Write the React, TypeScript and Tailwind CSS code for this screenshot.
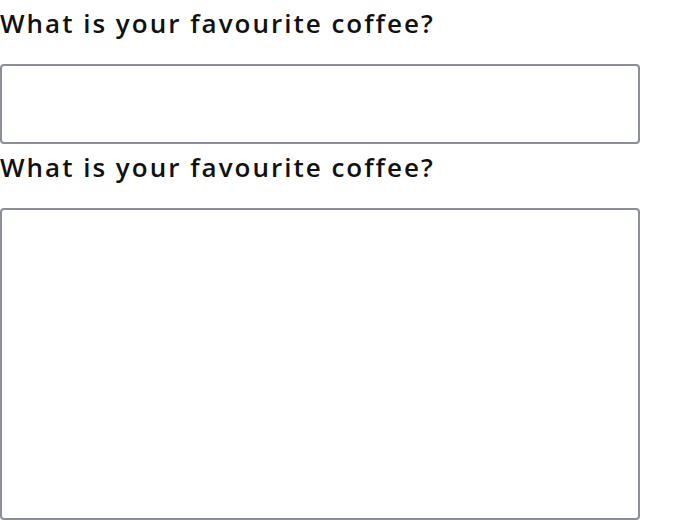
import React from "react";

const Label = ({ htmlFor }: { htmlFor: string }) => (
  <label
    htmlFor={htmlFor}
    className="block mb-[18px] text-[26px] leading-[46px] font-semibold tracking-[2px] text-[#111111]"
  >
    What is your favourite coffee?
  </label>
);

export default function App() {
  return (
    <div className="w-[686px] h-[520px] bg-white overflow-hidden" style={{ fontFamily: '"Open Sans", sans-serif' }}>
      <div className="w-[640px] flex flex-col">
        <Label htmlFor="coffee-1" />
        <input id="coffee-1" type="text" className="block w-[640px] h-[80px] border-2 border-[#8a8f98] rounded-[4px] bg-white" />
        <Label htmlFor="coffee-2" />
        <textarea id="coffee-2" className="block w-[640px] h-[312px] border-2 border-[#8a8f98] rounded-[4px] bg-white resize-none" />
      </div>
    </div>
  );
}
